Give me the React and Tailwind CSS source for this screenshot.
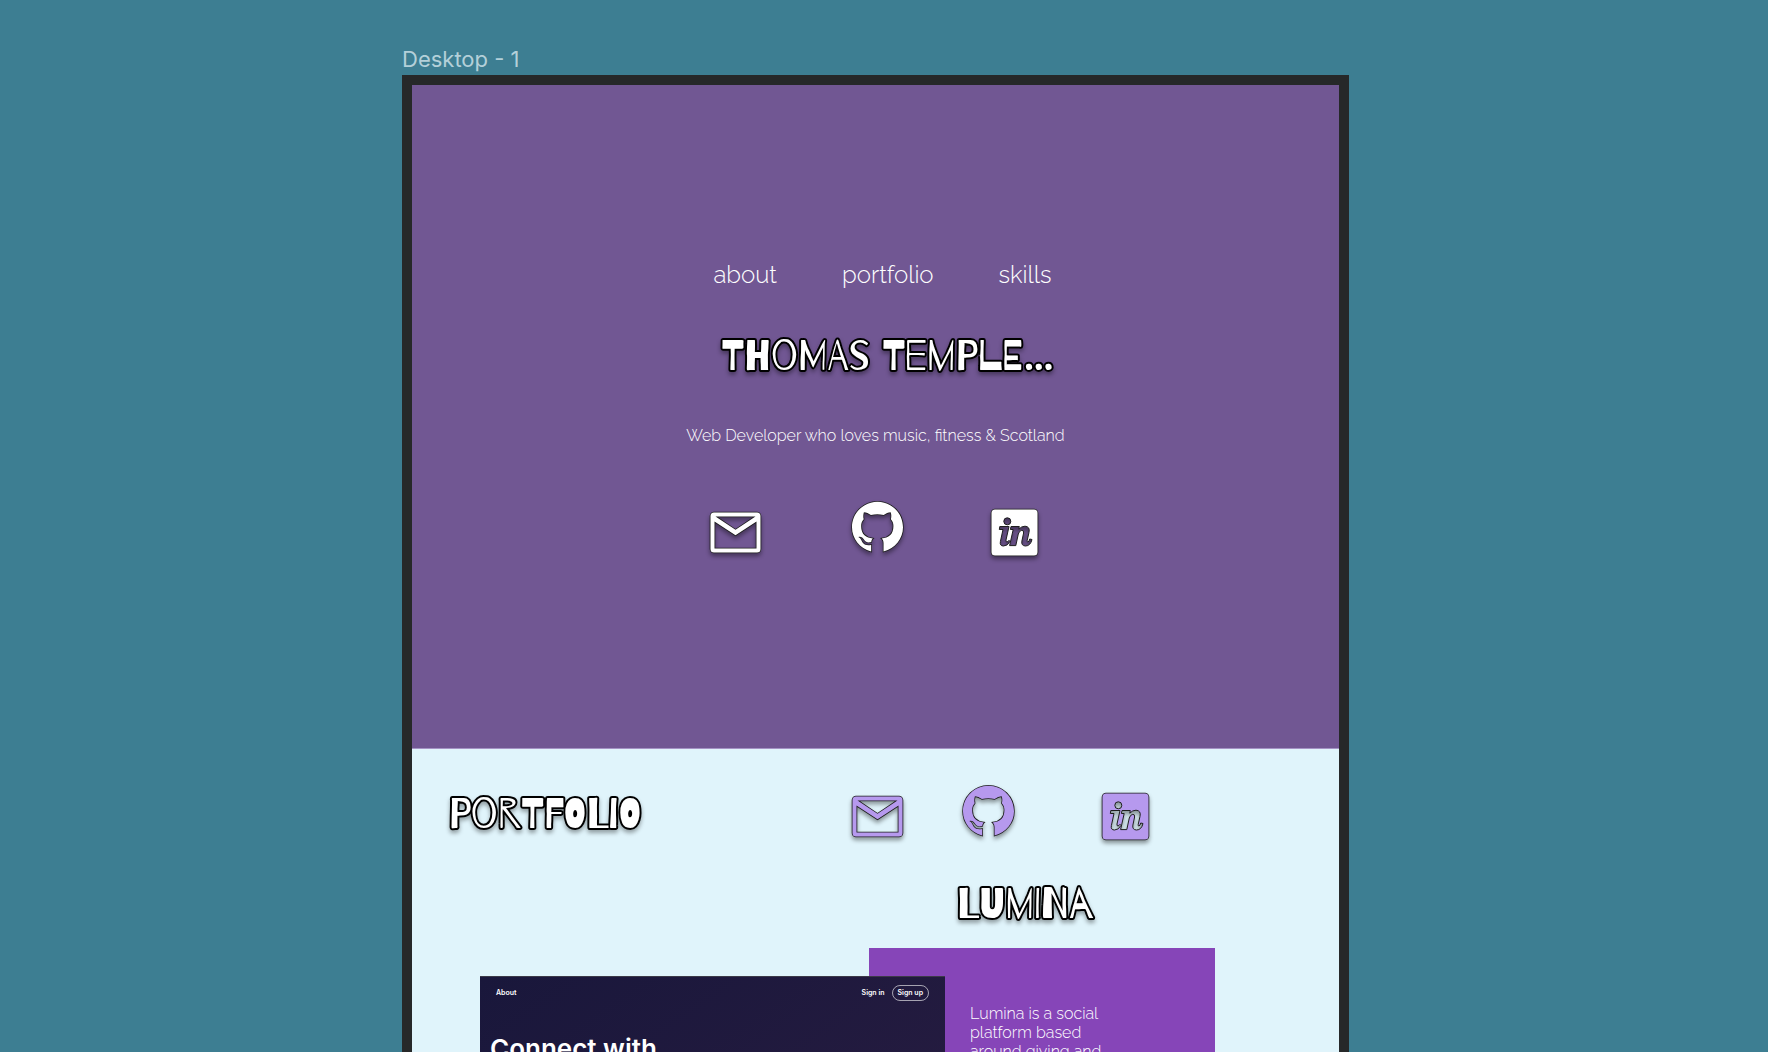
const display =
  "whitespace-nowrap font-['Barrio',sans-serif] text-[42px] leading-[48px] text-white [-webkit-text-stroke:4px_#000] [paint-order:stroke_fill] [stroke-linejoin:round] drop-shadow-[0_3px_2px_rgba(0,0,0,0.35)]";

const iconStyle =
  "block overflow-visible drop-shadow-[0_3px_2px_rgba(0,0,0,0.4)] [paint-order:stroke_fill]";

function MailIcon() {
  return (
    <svg width="51" height="41" viewBox="0 0 51 41" className={iconStyle} fill="currentColor" fillRule="evenodd" stroke="#1e1e1e" strokeWidth="1.6" aria-hidden="true">
      <path d="M4 .5H47A3.5 3.5 0 0 1 50.5 4V37A3.5 3.5 0 0 1 47 40.5H4A3.5 3.5 0 0 1 .5 37V4A3.5 3.5 0 0 1 4 .5ZM5.500 4.500H45.500L25.500 17.800ZM4.500 9.500L25.500 23.200L46.500 9.500V36.500H4.500Z" />
    </svg>
  );
}

function GithubIcon() {
  return (
    <svg width="51" height="51" viewBox="0 0 24 24" className={iconStyle} fill="currentColor" aria-hidden="true">
      <path
        stroke="#1e1e1e"
        strokeWidth=".7"
        d="M12 .3C5.400.3 0 5.700 0 12.300c0 5.300 3.600 9.900 9 11.500v-3.100c-3.300.6-4-1-4.600-2.200-.3-.7-.8-1.100-1.400-1.500.9-.5 2 .1 2.700 1.200.8 1.300 1.900 1.500 3.350 1.100.1-.75.4-1.300.750-1.600-3.100-.4-5.500-1.700-5.500-5.900 0-1.400.4-2.400 1.200-3.250-.3-1-.2-2.200.1-3.200 1.200 0 2.200.6 3.300 1.250 2-.5 4-.5 6 0 1.100-.65 2.100-1.250 3.300-1.250.4 1 .4 2.200.1 3.200.8.850 1.200 1.850 1.200 3.250 0 4.200-2.400 5.500-5.500 5.900.6.550.85 1.200.85 2.200v3.900C20.400 22.200 24 17.600 24 12.300 24 5.700 18.600.3 12 .3Z"
      />
    </svg>
  );
}

const IN_SHAPES = (
  <>
    <circle cx="16.300" cy="12.300" r="3.500" />
    <path d="M8.800 17.500H18L15 31Q14.600 33 16 33Q17 32.700 18 31.300L19 32.500Q16.500 37 12.500 37Q8.500 37 9.400 32.500L12 20.500H8.300Z" />
    <path d="M20 17.500H28.300L27.800 20.200Q30.500 17.200 34 17.200Q39.300 17.600 38 23.400L36.200 31.500Q35.900 33.200 37 33Q38.200 32.500 38.700 30L41 30.500Q39.500 36.900 34.500 37Q30 36.800 30.900 32L32.600 24Q33 21.200 30.800 21.300Q28.300 21.600 27.300 25L24.800 36.600H18.600L22.200 20.500H19.400Z" />
  </>
);

function LinkedinIcon({ id }) {
  return (
    <svg width="47" height="47" viewBox="0 0 47 47" className={iconStyle} aria-hidden="true">
      <mask id={id}>
        <rect x="-1" y="-1" width="49" height="49" fill="#fff" />
        <g fill="#000">{IN_SHAPES}</g>
      </mask>
      <rect x=".5" y=".5" width="46" height="46" rx="3.500" fill="currentColor" stroke="#1e1e1e" strokeWidth="1.600" mask={`url(#${id})`} />
      <g fill="none" stroke="#1e1e1e" strokeWidth="1">{IN_SHAPES}</g>
    </svg>
  );
}

const raleway = "font-['Raleway','Lato',sans-serif] font-[350]";

export default function App() {
  return (
    <div className="grid h-screen grid-cols-[402fr_947fr_419fr] overflow-hidden bg-[#3d7e92]">
      <main className="col-start-2 flex flex-col">
        <p className="pt-[43px] font-['Inter',sans-serif] text-[22px] leading-8 text-[#b4d0d9]">Desktop - 1</p>

        <div className="border-x-10 border-t-10 border-[#262829]">
          <header className="flex flex-col items-center bg-[#715793] pt-[174px] pb-[192px] text-white">
            <nav className={`flex gap-[65px] pl-3.5 text-2xl ${raleway}`}>
              <a href="#about">about</a>
              <a href="#portfolio">portfolio</a>
              <a href="#skills">skills</a>
            </nav>
            <h1 className={`${display} mt-[42px] pl-6`}>Thomas Temple...</h1>
            <p className={`mt-[43px] text-base ${raleway}`}>Web Developer who loves music, fitness &amp; Scotland</p>
            <div className="mt-[53px] flex items-center pr-[3px]">
              <a href="#mail" aria-label="Email" className="pt-2">
                <MailIcon />
              </a>
              <a href="#github" aria-label="GitHub" className="ml-[91px] pb-1">
                <GithubIcon />
              </a>
              <a href="#linkedin" aria-label="LinkedIn" className="ml-[88px] pt-2">
                <LinkedinIcon id="in-hero" />
              </a>
            </div>
          </header>

          <section id="portfolio" className="h-screen border-t border-[#a493c4] bg-[#e0f4fb]">
            <div className="flex items-center pt-9 pl-[37px] text-[#b699ee]">
              <h2 className={`${display} w-[403px] pt-1`}>Portfolio</h2>
              <a href="#mail" aria-label="Email" className="pt-2">
                <MailIcon />
              </a>
              <a href="#github" aria-label="GitHub" className="ml-[60px] pb-1">
                <GithubIcon />
              </a>
              <a href="#linkedin" aria-label="LinkedIn" className="ml-[88px] pt-2">
                <LinkedinIcon id="in-section" />
              </a>
            </div>

            <h3 className={`${display} mt-[41px] ml-[545px]`}>Lumina</h3>

            <div className="mt-[19px] grid grid-cols-[68fr_389fr_76fr_270fr_124fr]">
              <div className="col-start-3 col-end-5 row-start-1 bg-[#8645b8] pt-14 pl-[101px]">
                <p className={`w-36 text-base leading-[19px] text-white ${raleway}`}>
                  Lumina is a social platform based around giving and
                </p>
              </div>
              <div className="z-10 col-start-2 col-end-4 row-start-1 mt-7 h-80 border-t border-[#3c3a48] bg-linear-to-br from-[#19173b] to-[#2a1d42] font-['Inter',sans-serif] text-white">
                <div className="flex items-center pt-2 pr-4 pl-4 text-[7px] leading-4 font-semibold">
                  <a href="#about-lumina">About</a>
                  <a href="#signin" className="mr-[7px] ml-auto">Sign in</a>
                  <button className="rounded-full border border-white/60 px-[5px] text-[7px] leading-[14px] font-semibold">Sign up</button>
                </div>
                <h4 className="mt-8 pl-2.5 text-[26px] leading-8 font-semibold">Connect with</h4>
              </div>
            </div>
          </section>
        </div>
      </main>
    </div>
  );
}
